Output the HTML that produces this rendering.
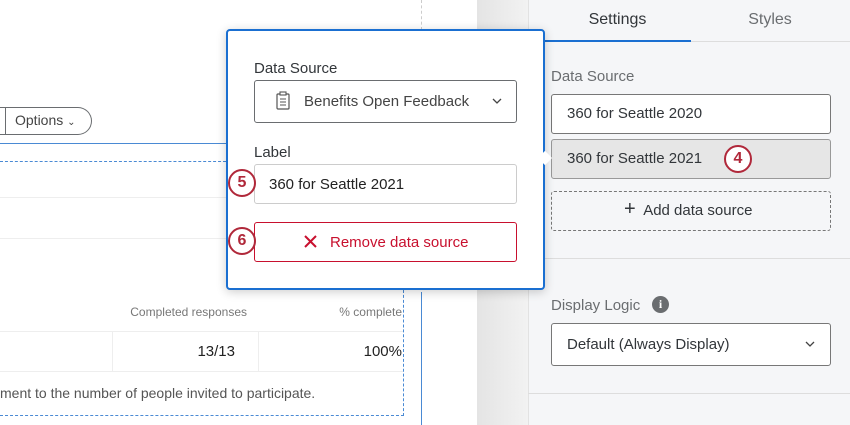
<!DOCTYPE html>
<html><head><style>
*{box-sizing:border-box;margin:0;padding:0}
body{width:850px;height:425px;overflow:hidden;position:relative;background:#fff;font-family:"Liberation Sans",sans-serif;color:#32363a}
.a{position:absolute}
.t{font-size:15px;white-space:nowrap}
.badge{position:absolute;width:28px;height:28px;border:2.5px solid #b0283a;border-radius:50%;background:#fff;color:#b0283a;font-size:16px;text-align:center;line-height:23px;font-weight:bold}
</style></head><body>
<!-- left canvas -->
<div class="a" style="left:421px;top:0;height:30px;border-left:1px dashed #ccc"></div>
<div class="a" style="left:0;top:107px;width:92px;height:28px;border:1px solid #6a6d70;border-left:none;border-radius:0 14px 14px 0"></div>
<div class="a" style="left:5px;top:107px;height:28px;border-left:1px solid #6a6d70"></div>
<div class="a t" style="left:15px;top:112px;font-size:14px;color:#444">Options <span style="font-size:10px">&#8964;</span></div>
<div class="a" style="left:0;top:143px;width:226px;border-top:1px solid #4a8ad4"></div>
<div class="a" style="left:0;top:161px;width:226px;border-top:1px dashed #4a8ad4"></div>
<div class="a" style="left:0;top:197px;width:226px;border-top:1px solid #eee"></div>
<div class="a" style="left:0;top:238px;width:226px;border-top:1px solid #eee"></div>
<div class="a" style="left:0;top:290px;width:404px;height:126px;border-right:1px dashed #4a8ad4;border-bottom:1px dashed #4a8ad4"></div>
<div class="a" style="left:421px;top:292px;height:133px;border-left:1px solid #4a8ad4"></div>
<div class="a t" style="left:100px;top:305px;width:147px;text-align:right;font-size:12px;color:#777">Completed responses</div>
<div class="a t" style="left:300px;top:305px;width:102px;text-align:right;font-size:12px;color:#777">% complete</div>
<div class="a" style="left:0;top:331px;width:403px;border-top:1px solid #eee"></div>
<div class="a" style="left:0;top:371px;width:403px;border-top:1px solid #eee"></div>
<div class="a" style="left:112px;top:331px;height:40px;border-left:1px solid #eee"></div>
<div class="a" style="left:258px;top:331px;height:40px;border-left:1px solid #eee"></div>
<div class="a t" style="left:150px;top:343px;width:85px;text-align:right;color:#222">13/13</div>
<div class="a t" style="left:300px;top:343px;width:102px;text-align:right;color:#222">100%</div>
<div class="a t" style="left:0;top:385px;font-size:14px;color:#555">ment to the number of people invited to participate.</div>
<!-- gray band -->
<div class="a" style="left:477px;top:0;width:51px;height:425px;background:linear-gradient(90deg,#e4e4e4,#f2f2f2)"></div>
<div class="a" style="left:528px;top:0;width:322px;height:425px;background:#f5f6f8;border-left:1px solid #e2e2e2"></div>
<!-- right panel -->
<div class="a t" style="left:545px;top:11px;width:145px;text-align:center;font-size:16px;color:#32363a">Settings</div>
<div class="a t" style="left:700px;top:11px;width:140px;text-align:center;font-size:16px;color:#6a6d70">Styles</div>
<div class="a" style="left:528px;top:41px;width:322px;border-top:1px solid #ddd"></div>
<div class="a" style="left:545px;top:40px;width:146px;border-top:2px solid #1a6fd1"></div>
<div class="a t" style="left:551px;top:68px;color:#6a6d70">Data Source</div>
<div class="a" style="left:551px;top:94px;width:280px;height:40px;background:#fff;border:1px solid #777;border-radius:3px"></div>
<div class="a t" style="left:567px;top:105px">360 for Seattle 2020</div>
<div class="a" style="left:551px;top:139px;width:280px;height:40px;background:#e6e6e6;border:1px solid #999;border-radius:3px"></div>
<div class="a t" style="left:567px;top:150px">360 for Seattle 2021</div>
<div class="badge" style="left:724px;top:145px">4</div>
<div class="a" style="left:551px;top:191px;width:280px;height:40px;border:1px dashed #777;border-radius:3px"></div>
<div class="a t" style="left:624px;top:202px"><span style="font-size:20px;line-height:15px">+</span>&nbsp; Add data source</div>
<div class="a" style="left:528px;top:258px;width:322px;border-top:1px solid #ddd"></div>
<div class="a t" style="left:551px;top:297px;color:#6a6d70">Display Logic</div>
<div class="a" style="left:652px;top:296px;width:17px;height:17px;border-radius:50%;background:#6a6d70;color:#fff;font-size:12px;font-weight:bold;text-align:center;line-height:17px;font-family:'Liberation Serif',serif">i</div>
<div class="a" style="left:551px;top:323px;width:280px;height:43px;background:#fff;border:1px solid #777;border-radius:3px"></div>
<div class="a t" style="left:567px;top:336px">Default (Always Display)</div>
<svg class="a" style="left:805px;top:340px" width="10" height="8"><path d="M1 2 L5 6 L9 2" fill="none" stroke="#444" stroke-width="1.3"/></svg>
<div class="a" style="left:528px;top:393px;width:322px;border-top:1px solid #ddd"></div>
<!-- popup -->
<div class="a" style="left:226px;top:29px;width:319px;height:261px;background:#fff;border:2px solid #1a6fd1;border-radius:4px;box-shadow:0 2px 10px rgba(0,0,0,.2)"></div>
<div class="a" style="left:540px;top:153px;width:10px;height:10px;background:#fff;transform:rotate(45deg)"></div>
<div class="a t" style="left:254px;top:60px">Data Source</div>
<div class="a" style="left:254px;top:80px;width:263px;height:43px;border:1px solid #6a6d70;border-radius:3px"></div>
<svg class="a" style="left:276px;top:91px" width="14" height="19"><rect x="1" y="3" width="12" height="15" rx="1" fill="none" stroke="#555" stroke-width="1.2"/><rect x="4" y="1" width="6" height="3" fill="#fff" stroke="#555" stroke-width="1.1"/><path d="M4 8h6M4 11h6M4 14h6" stroke="#555" stroke-width="1.1"/></svg>
<div class="a t" style="left:304px;top:93px;color:#444">Benefits Open Feedback</div>
<svg class="a" style="left:492px;top:97px" width="10" height="8"><path d="M1 2 L5 6 L9 2" fill="none" stroke="#444" stroke-width="1.3"/></svg>
<div class="a t" style="left:254px;top:144px">Label</div>
<div class="a" style="left:254px;top:164px;width:263px;height:40px;border:1px solid #ccc;border-radius:3px"></div>
<div class="a t" style="left:269px;top:176px;color:#222">360 for Seattle 2021</div>
<div class="badge" style="left:228px;top:169px">5</div>
<div class="a" style="left:254px;top:222px;width:263px;height:40px;border:1px solid #c8102e;border-radius:3px"></div>
<svg class="a" style="left:304px;top:235px" width="13" height="13"><path d="M1 1L12 12M12 1L1 12" stroke="#c8102e" stroke-width="2"/></svg>
<div class="a t" style="left:330px;top:234px;color:#c8102e">Remove data source</div>
<div class="badge" style="left:228px;top:227px">6</div>
</body></html>
